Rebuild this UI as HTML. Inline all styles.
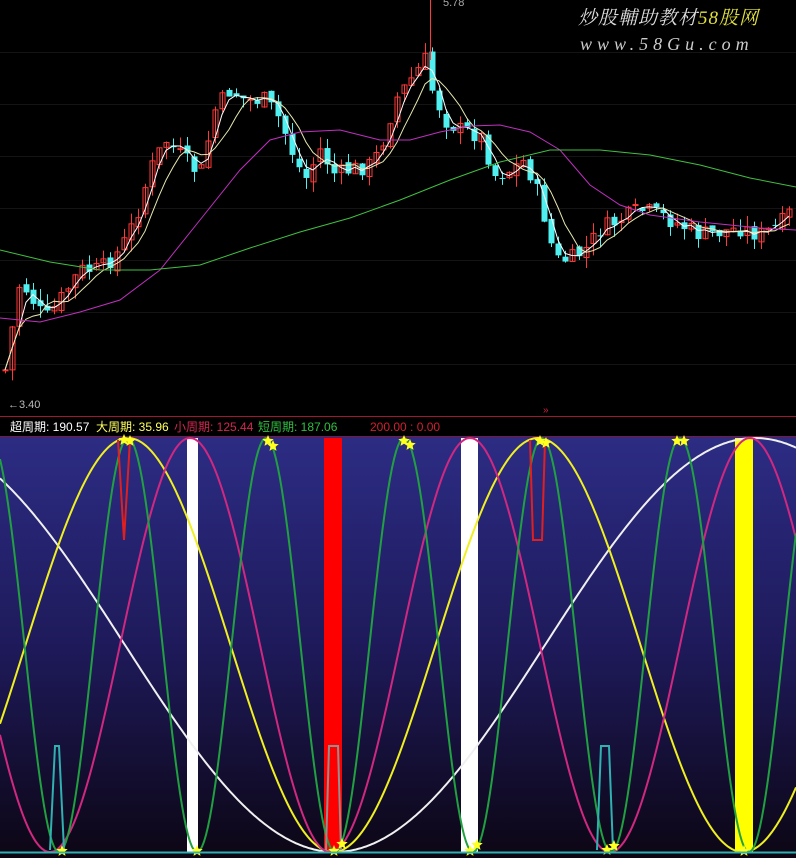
<!DOCTYPE html>
<html><head><meta charset="utf-8">
<style>
html,body{margin:0;padding:0;background:#000;width:796px;height:858px;overflow:hidden}
svg{display:block}
.lab{font-family:"Liberation Sans","Noto Sans CJK SC",sans-serif;font-size:12px}
</style></head><body>
<svg id="s" width="796" height="858" xmlns="http://www.w3.org/2000/svg">
<defs>
<linearGradient id="bg" x1="0" y1="0" x2="0" y2="1">
<stop offset="0" stop-color="#2c2c84"/>
<stop offset="0.5" stop-color="#1e1a5a"/>
<stop offset="1" stop-color="#0c0614"/>
</linearGradient>
</defs>
<rect x="0" y="0" width="796" height="416" fill="#000"/>
<g id="grid" stroke="#141414" stroke-width="1"></g>
<g id="cand"></g>
<g id="ma" fill="none"></g>
<text x="443" y="6" fill="#aaa" font-family="Liberation Sans" font-size="11">5.78</text>
<text x="8" y="408" fill="#bbb" font-family="Liberation Sans" font-size="11">←3.40</text>
<text x="543" y="413" fill="#d02040" font-family="Liberation Sans" font-size="10">»</text>
<text x="578" y="24" fill="#ddd" font-family="Liberation Serif,'Noto Serif CJK SC',serif" font-style="italic" font-size="19" letter-spacing="1">炒股輔助教材<tspan fill="#e0e040">58股网</tspan></text>
<text x="580" y="50" fill="#ccc" font-family="Liberation Serif,serif" font-style="italic" font-size="18" letter-spacing="5">www.58Gu.com</text>
<line x1="0" y1="416.5" x2="796" y2="416.5" stroke="#a01830"/>
<rect x="0" y="417" width="796" height="19" fill="#000"/>
<text class="lab" x="10" y="431" fill="#fff">超周期: 190.57</text>
<text class="lab" x="96" y="431" fill="#ffff60">大周期: 35.96</text>
<text class="lab" x="174" y="431" fill="#d02850">小周期: 125.44</text>
<text class="lab" x="258" y="431" fill="#30c040">短周期: 187.06</text>
<text class="lab" x="370" y="431" fill="#d02030">200.00 : 0.00</text>
<rect x="0" y="437" width="796" height="421" fill="url(#bg)"/>
<line x1="0" y1="436.5" x2="796" y2="436.5" stroke="#801838"/>
<g id="bars"></g>
<g id="curves" fill="none" stroke-width="2"></g>
<g id="stars" fill="#ffff20"></g>
<line x1="0" y1="852.5" x2="796" y2="852.5" stroke="#30b0b0" stroke-width="2"/>
</svg>
<script>
var NS="http://www.w3.org/2000/svg";
function el(p,t,a){var e=document.createElementNS(NS,t);for(var k in a)e.setAttribute(k,a[k]);document.getElementById(p).appendChild(e);return e;}
for(var y=52;y<416;y+=52)el("grid","line",{x1:0,y1:y+.5,x2:796,y2:y+.5});
var P=[[5,370],[20,280],[45,320],[60,300],[80,270],[100,270],[120,250],[135,220],[150,170],[165,140],[180,155],[200,175],[215,110],[230,90],[245,100],[265,100],[280,120],[295,160],[305,180],[320,150],[335,175],[350,170],[370,165],[380,150],[395,100],[410,80],[425,60],[432,90],[445,120],[460,130],[480,135],[495,175],[510,170],[525,160],[540,200],[555,260],[570,260],[585,250],[600,230],[620,220],[640,210],[660,215],[680,225],[700,235],[720,232],[740,228],[760,235],[780,225],[792,210]];
function interp(A,x){for(var i=0;i<A.length-1;i++){if(x<=A[i+1][0]){var t=(x-A[i][0])/(A[i+1][0]-A[i][0]);return A[i][1]+t*(A[i+1][1]-A[i][1]);}}return A[A.length-1][1];}
var seed=7;function rnd(){seed=(seed*9301+49297)%233280;return seed/233280;}
var closes=[],xs=[];
var prev=interp(P,5);
for(var x=5;x<794;x+=7){
 var c=interp(P,x)+(rnd()-0.5)*18;
 var o=prev+(rnd()-0.5)*8;
 var hi=Math.min(o,c)-rnd()*12, lo=Math.max(o,c)+rnd()*12;
 var up=c<o;
 var col=up?"#ff3838":"#50f0f0";
 el("cand","line",{x1:x+.5,y1:hi,x2:x+.5,y2:lo,stroke:col});
 var h=Math.max(1,Math.abs(c-o));
 if(up)el("cand","rect",{x:x-2,y:Math.min(o,c),width:5,height:h,fill:"none",stroke:col});
 else el("cand","rect",{x:x-2.5,y:Math.min(o,c),width:6,height:h,fill:col});
 closes.push(c);xs.push(x);prev=c;
}
el("cand","line",{x1:430.5,y1:0,x2:430.5,y2:60,stroke:"#ff3838"});
function ma(n,col){var d="";for(var i=0;i<closes.length;i++){var s=0,k=0;for(var j=Math.max(0,i-n+1);j<=i;j++){s+=closes[j];k++;}d+=(i?"L":"M")+xs[i]+","+(s/k).toFixed(1);}el("ma","path",{d:d,stroke:col,"stroke-width":1});}
ma(3,"#ffffff");ma(6,"#e8e8b0");
function line(A,col){var d="";for(var i=0;i<A.length;i++)d+=(i?"L":"M")+A[i][0]+","+A[i][1];el("ma","path",{d:d,stroke:col,"stroke-width":1});}
line([[0,318],[40,322],[80,312],[120,300],[160,270],[200,220],[240,170],[270,140],[300,132],[340,130],[380,140],[410,140],[440,132],[470,126],[500,125],[530,132],[560,150],[590,185],[620,205],[650,215],[700,222],[760,228],[796,230]],"#c030c0");
line([[0,250],[50,262],[100,270],[150,270],[200,265],[250,248],[300,232],[350,218],[400,200],[450,180],[500,162],[550,150],[600,150],[650,155],[700,165],[750,178],[796,187]],"#40c040");
var B=852,T=438,H=B-T;
function bar(x,w,col){el("bars","rect",{x:x,y:T,width:w,height:B-T,fill:col});}
bar(187,11,"#ffffff");bar(324,18,"#ff0000");bar(461,17,"#ffffff");bar(735,18,"#ffff00");
function wave(peak,per,col){var d="";for(var x=0;x<=796;x+=2){var v=0.5+0.5*Math.cos(2*Math.PI*(x-peak)/per);d+=(x?"L":"M")+x+","+(B-H*v).toFixed(1);}el("curves","path",{d:d,stroke:col});}
wave(755,840,"#f0f0f0");
wave(128,410,"#f0f020");
wave(190,280,"#d02880");
wave(128,138,"#20a040");
el("curves","path",{d:"M118,440L124,540L130,440",stroke:"#e02020"});
el("curves","path",{d:"M530,440L533,540L542,540L545,440",stroke:"#e02020"});
el("curves","path",{d:"M50,850L55,746L59,746L64,850",stroke:"#30b0b0"});
el("curves","path",{d:"M326,850L329,746L338,746L341,850",stroke:"#909090"});
el("curves","path",{d:"M597,850L601,746L609,746L613,850",stroke:"#30b0b0"});
function star(cx,cy,r){var d="";for(var i=0;i<10;i++){var a=-Math.PI/2+i*Math.PI/5,rr=i%2?r*0.45:r;d+=(i?"L":"M")+(cx+rr*Math.cos(a)).toFixed(1)+","+(cy+rr*Math.sin(a)).toFixed(1);}el("stars","path",{d:d+"Z"});}
[[124,440],[130,441],[268,441],[273,446],[404,441],[410,445],[540,441],[546,443],[677,441],[684,441],[62,851],[197,851],[334,851],[342,844],[470,851],[477,845],[607,850],[614,846],[744,851]].forEach(function(p){star(p[0],p[1],6);});
</script>
</body></html>
